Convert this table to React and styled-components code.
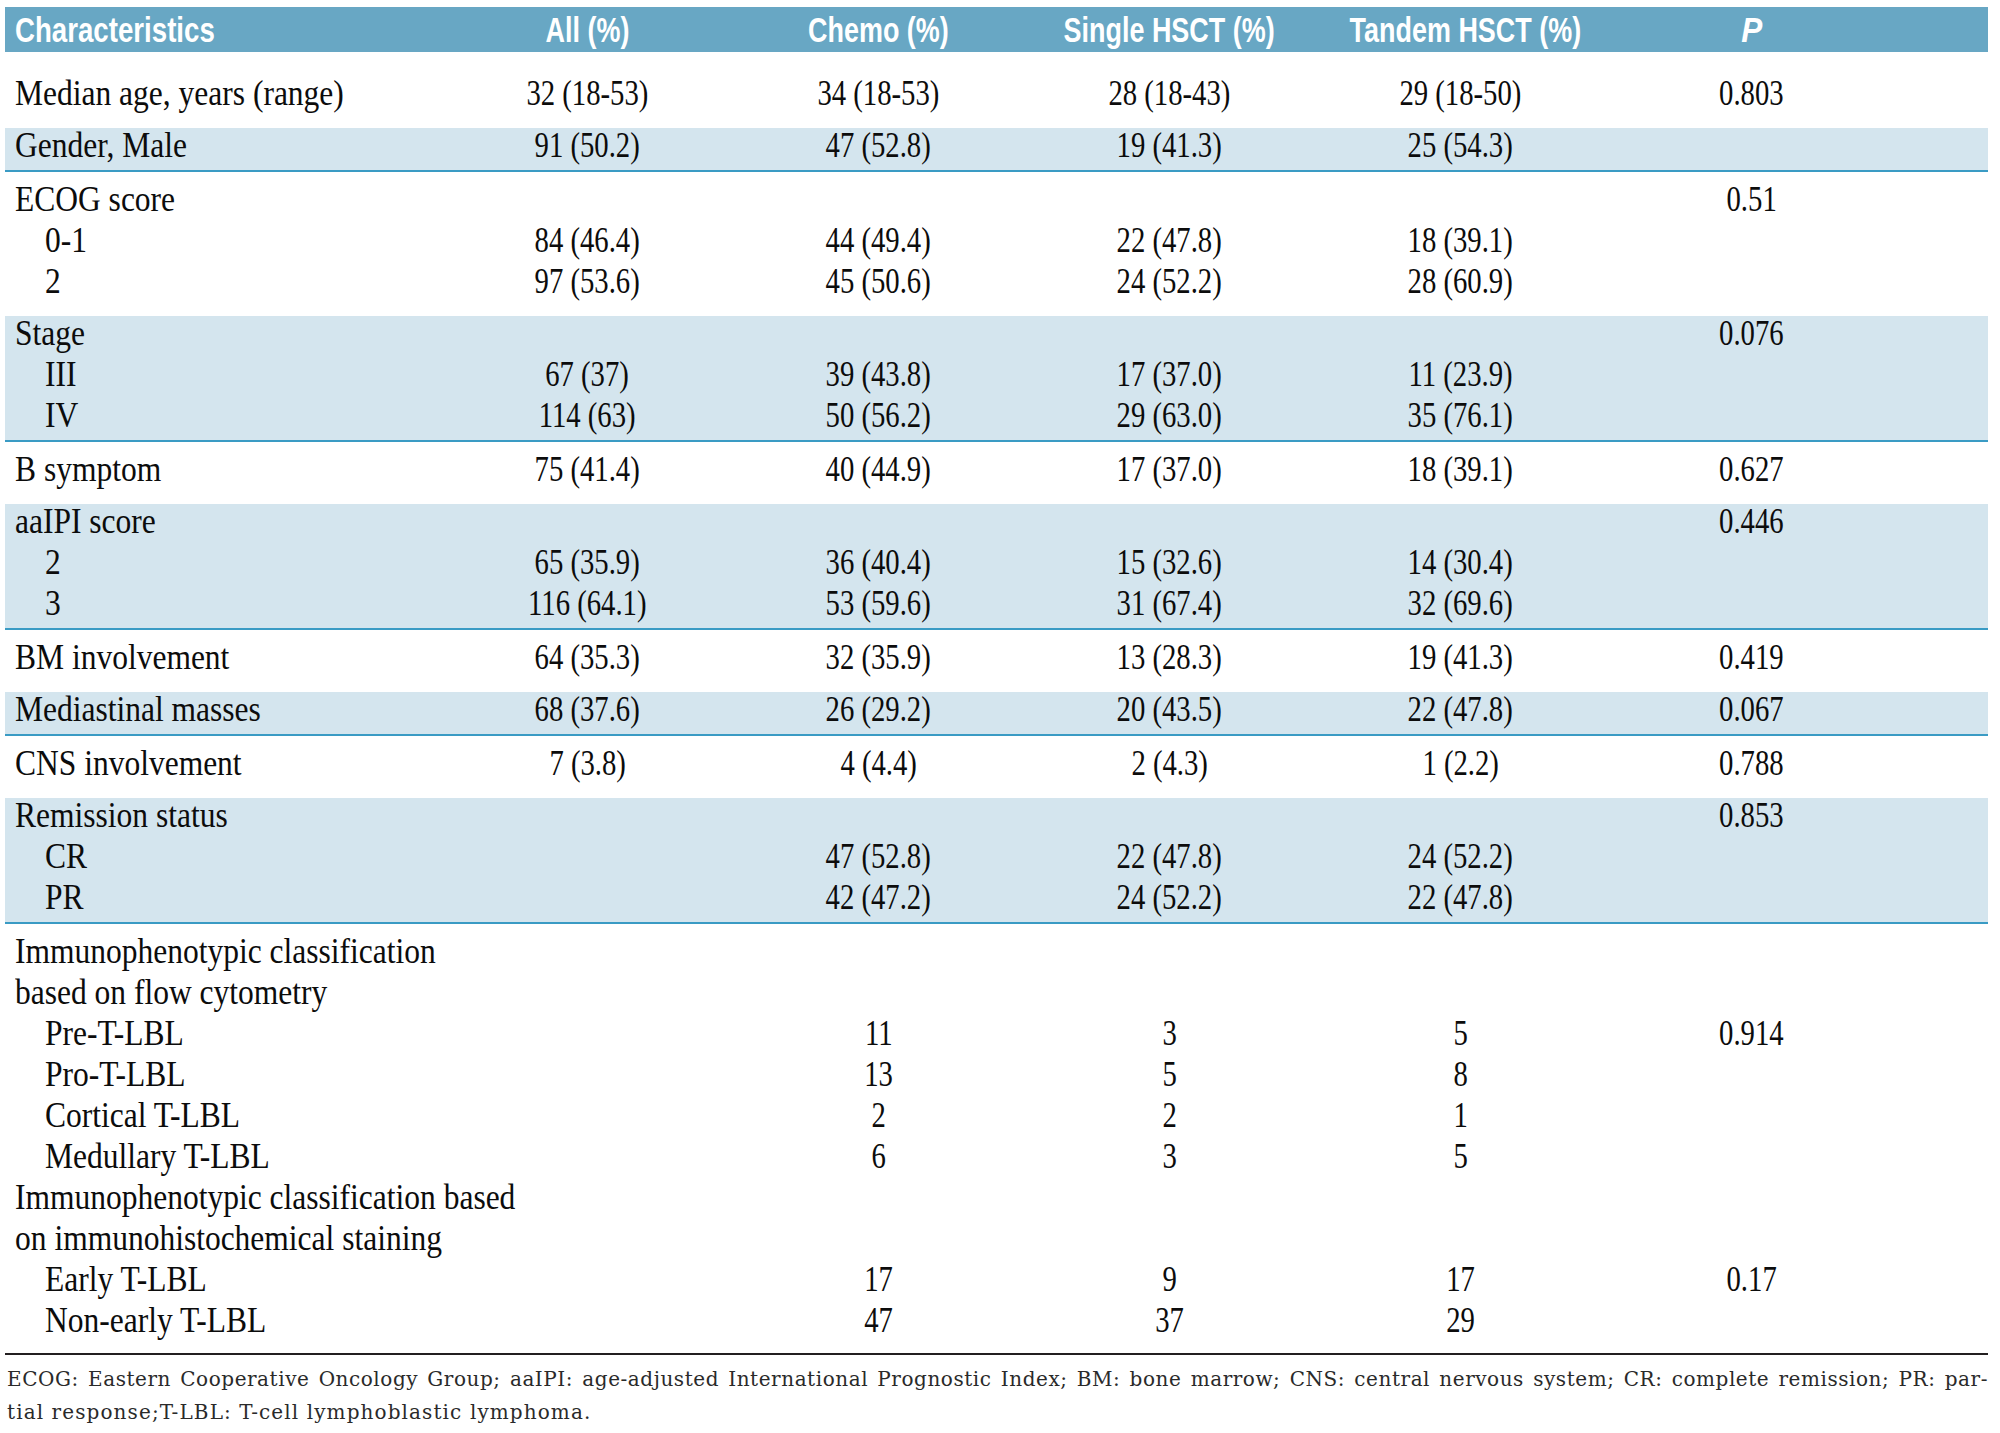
import React from "react";
import styled, { createGlobalStyle } from "styled-components";

const GlobalStyle = createGlobalStyle`
  html, body { margin: 0; padding: 0; background: #ffffff; }
  body { font-family: "Liberation Serif", "Times New Roman", serif; color: #0c0c0c; }
`;

const COLS = "437px repeat(5, 291px) 1fr";

const Page = styled.div`
  padding: 7px 0 0 5px;
  width: 1983px;
`;

const HeadRow = styled.div`
  display: grid;
  grid-template-columns: ${COLS};
  height: 45px;
  align-items: center;
  background: #68a7c4;
  color: #ffffff;
  font-family: "Liberation Sans", Arial, sans-serif;
  font-weight: 700;
  font-size: 35px;
  line-height: 45px;
`;

const Group = styled.div`
  background: ${(p) => (p.$band ? "#d4e5ee" : "transparent")};
  padding: ${(p) => (p.$band ? "0 0 1px" : `${p.$top}px 0 ${p.$bottom}px`)};
  border-bottom: ${(p) =>
    p.$band ? "2px solid #3a9bc4" : p.$last ? "2px solid #231f20" : "none"};
`;

const Row = styled.div`
  display: grid;
  grid-template-columns: ${COLS};
  height: 41px;
  align-items: start;
  font-size: 35px;
  line-height: ${(p) => (p.$band ? 35 : 41)}px;
`;

const LabelCell = styled.div`
  padding-left: ${(p) => (p.$indent ? 40 : 10)}px;
  white-space: nowrap;
`;

const NumCell = styled.div`
  text-align: center;
  white-space: nowrap;
`;

const Squeeze = styled.span`
  display: inline-block;
  white-space: nowrap;
  transform: scaleX(${(p) => p.$sx});
  transform-origin: ${(p) => p.$origin || "center"} center;
  font-style: ${(p) => (p.$italic ? "italic" : "normal")};
`;

const Footnote = styled.div`
  padding: 8px 0 0 2px;
  font-family: "DejaVu Serif", "Liberation Serif", serif;
  font-size: 20px;
  line-height: 33px;
  color: #2a2a2a;
`;

const FootLine = styled.div`
  text-align: ${(p) => (p.$justify ? "justify" : "left")};
  text-align-last: ${(p) => (p.$justify ? "justify" : "left")};
  letter-spacing: ${(p) => (p.$justify ? 0.55 : 1.1)}px;
  white-space: ${(p) => (p.$justify ? "normal" : "nowrap")};
`;

const headers = ["All (%)", "Chemo (%)", "Single HSCT (%)", "Tandem HSCT (%)"];

const groups = [
  {
    top: 21,
    rows: [["Median age, years (range)", "32 (18-53)", "34 (18-53)", "28 (18-43)", "29 (18-50)", "0.803"]],
  },
  { band: true, rows: [["Gender, Male", "91 (50.2)", "47 (52.8)", "19 (41.3)", "25 (54.3)", ""]] },
  {
    rows: [
      ["ECOG score", "", "", "", "", "0.51"],
      ["0-1", "84 (46.4)", "44 (49.4)", "22 (47.8)", "18 (39.1)", "", true],
      ["2", "97 (53.6)", "45 (50.6)", "24 (52.2)", "28 (60.9)", "", true],
    ],
  },
  {
    band: true,
    rows: [
      ["Stage", "", "", "", "", "0.076"],
      ["III", "67 (37)", "39 (43.8)", "17 (37.0)", "11 (23.9)", "", true],
      ["IV", "114 (63)", "50 (56.2)", "29 (63.0)", "35 (76.1)", "", true],
    ],
  },
  { rows: [["B symptom", "75 (41.4)", "40 (44.9)", "17 (37.0)", "18 (39.1)", "0.627"]] },
  {
    band: true,
    rows: [
      ["aaIPI score", "", "", "", "", "0.446"],
      ["2", "65 (35.9)", "36 (40.4)", "15 (32.6)", "14 (30.4)", "", true],
      ["3", "116 (64.1)", "53 (59.6)", "31 (67.4)", "32 (69.6)", "", true],
    ],
  },
  { rows: [["BM involvement", "64 (35.3)", "32 (35.9)", "13 (28.3)", "19 (41.3)", "0.419"]] },
  { band: true, rows: [["Mediastinal masses", "68 (37.6)", "26 (29.2)", "20 (43.5)", "22 (47.8)", "0.067"]] },
  { rows: [["CNS involvement", "7 (3.8)", "4 (4.4)", "2 (4.3)", "1 (2.2)", "0.788"]] },
  {
    band: true,
    rows: [
      ["Remission status", "", "", "", "", "0.853"],
      ["CR", "", "47 (52.8)", "22 (47.8)", "24 (52.2)", "", true],
      ["PR", "", "42 (47.2)", "24 (52.2)", "22 (47.8)", "", true],
    ],
  },
  {
    last: true,
    bottom: 12,
    rows: [
      ["Immunophenotypic classification", "", "", "", "", ""],
      ["based on flow cytometry", "", "", "", "", ""],
      ["Pre-T-LBL", "", "11", "3", "5", "0.914", true],
      ["Pro-T-LBL", "", "13", "5", "8", "", true],
      ["Cortical T-LBL", "", "2", "2", "1", "", true],
      ["Medullary T-LBL", "", "6", "3", "5", "", true],
      ["Immunophenotypic classification based", "", "", "", "", ""],
      ["on immunohistochemical staining", "", "", "", "", ""],
      ["Early T-LBL", "", "17", "9", "17", "0.17", true],
      ["Non-early T-LBL", "", "47", "37", "29", "", true],
    ],
  },
];

function DataRow({ cells, band }) {
  const [label, a, b, c, d, p, indent] = cells;
  return (
    <Row $band={band}>
      <LabelCell $indent={indent}>
        <Squeeze $sx={0.9} $origin="left">{label}</Squeeze>
      </LabelCell>
      {[a, b, c, d, p].map((v, i) => (
        <NumCell key={i}>{v ? <Squeeze $sx={0.82}>{v}</Squeeze> : null}</NumCell>
      ))}
      <div />
    </Row>
  );
}

export default function App() {
  return (
    <>
      <GlobalStyle />
      <Page>
        <HeadRow>
          <LabelCell>
            <Squeeze $sx={0.79} $origin="left">Characteristics</Squeeze>
          </LabelCell>
          {headers.map((h) => (
            <NumCell key={h}>
              <Squeeze $sx={0.77}>{h}</Squeeze>
            </NumCell>
          ))}
          <NumCell>
            <Squeeze $sx={0.9} $italic>P</Squeeze>
          </NumCell>
          <div />
        </HeadRow>
        {groups.map((g, gi) => (
          <Group key={gi} $band={g.band} $last={g.last} $top={g.top ?? 7} $bottom={g.bottom ?? 14}>
            {g.rows.map((r, ri) => (
              <DataRow key={ri} cells={r} band={g.band} />
            ))}
          </Group>
        ))}
        <Footnote>
          <FootLine $justify>
            ECOG: Eastern Cooperative Oncology Group; aaIPI: age-adjusted International Prognostic Index; BM: bone marrow; CNS: central nervous system; CR: complete remission; PR: par-
          </FootLine>
          <FootLine>tial response;T-LBL: T-cell lymphoblastic lymphoma.</FootLine>
        </Footnote>
      </Page>
    </>
  );
}
